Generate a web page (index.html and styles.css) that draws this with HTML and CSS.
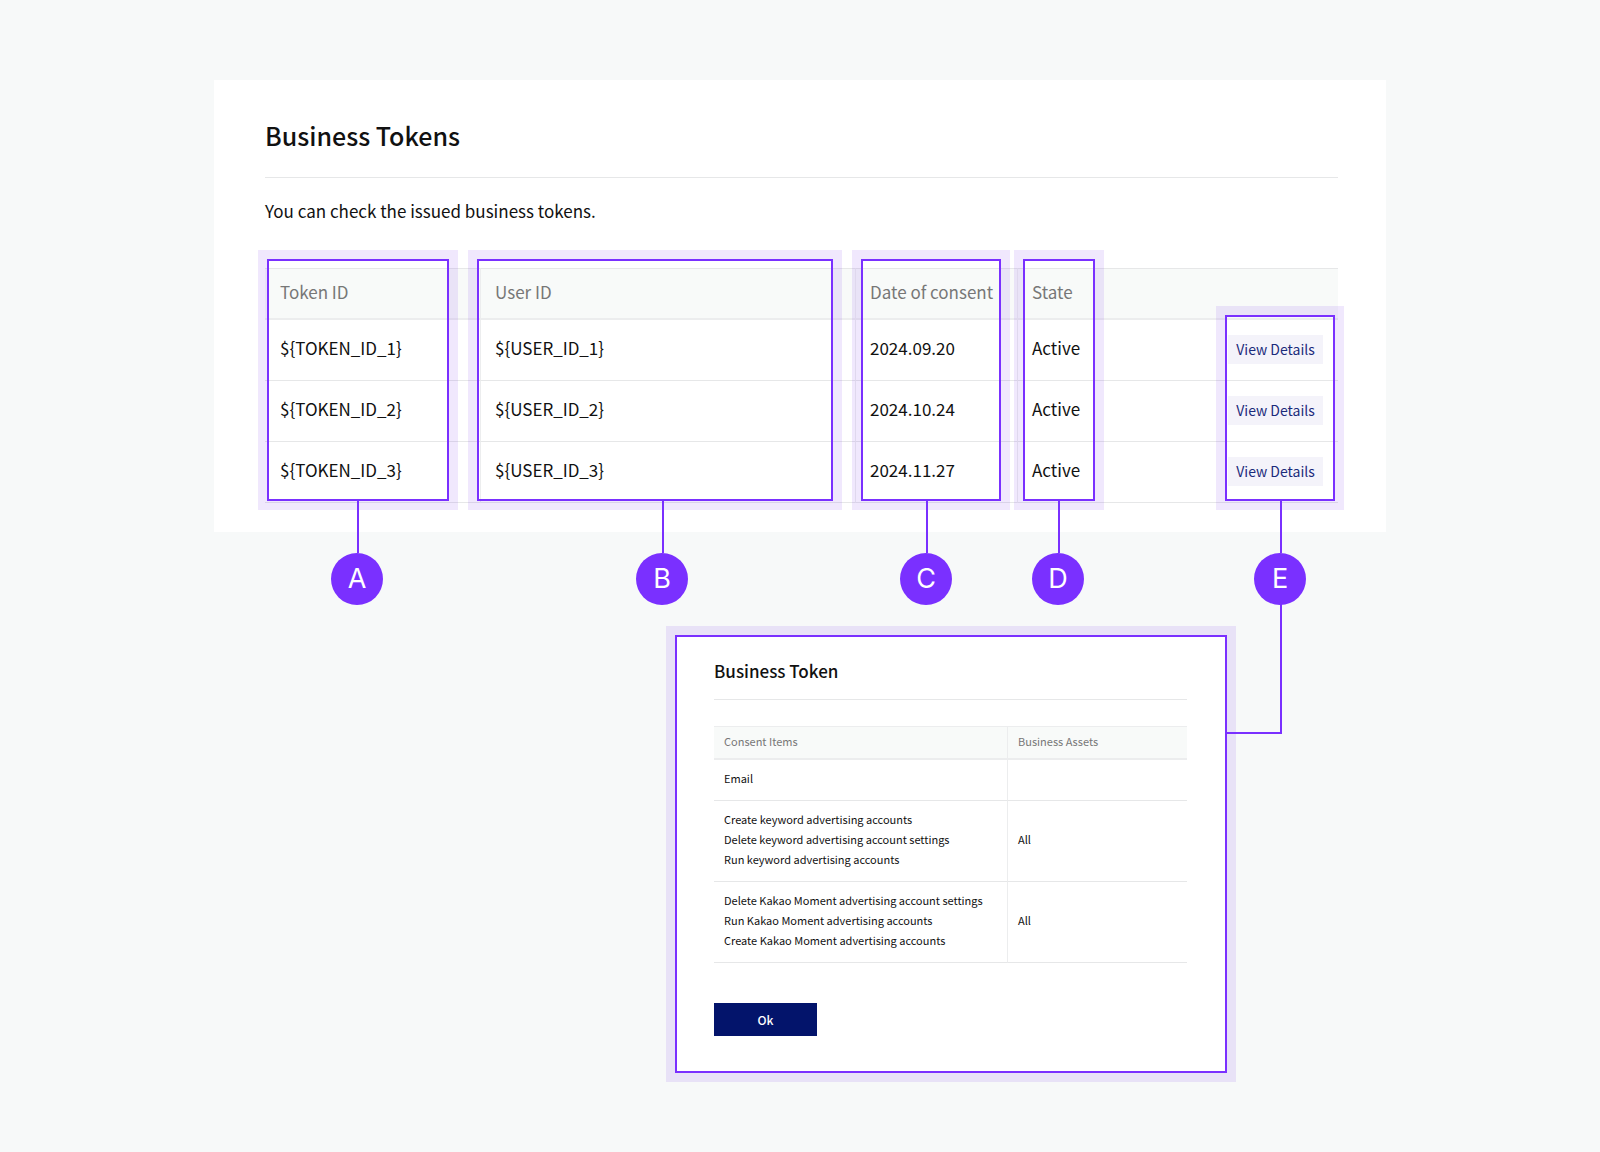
FILE: index.html
```html
<!DOCTYPE html>
<html lang="en">
<head>
<meta charset="utf-8">
<meta name="viewport" content="width=device-width, initial-scale=1">
<title>Business Tokens</title>
<link rel="stylesheet" href="styles.css">
</head>
<body>
<main class="figure">
  <section class="card">
    <h1 class="card-title">Business Tokens</h1>
    <p class="card-text">You can check the issued business tokens.</p>
    <table class="tokens">
      <colgroup>
        <col class="col-token"><col class="col-user"><col class="col-date"><col class="col-state"><col>
      </colgroup>
      <thead>
        <tr><th scope="col">Token ID</th><th scope="col">User ID</th><th scope="col">Date of consent</th><th scope="col">State</th><td></td></tr>
      </thead>
      <tbody>
        <tr><td>${TOKEN_ID_1}</td><td>${USER_ID_1}</td><td>2024.09.20</td><td>Active</td><td class="cell-action"><button class="details" type="button">View Details</button></td></tr>
        <tr><td>${TOKEN_ID_2}</td><td>${USER_ID_2}</td><td>2024.10.24</td><td>Active</td><td class="cell-action"><button class="details" type="button">View Details</button></td></tr>
        <tr><td>${TOKEN_ID_3}</td><td>${USER_ID_3}</td><td>2024.11.27</td><td>Active</td><td class="cell-action"><button class="details" type="button">View Details</button></td></tr>
      </tbody>
    </table>
  </section>

  <div class="callout callout-a"><div class="frame"></div><div class="stem"></div><span class="badge">A</span></div>
  <div class="callout callout-b"><div class="frame"></div><div class="stem"></div><span class="badge">B</span></div>
  <div class="callout callout-c"><div class="frame"></div><div class="stem"></div><span class="badge">C</span></div>
  <div class="callout callout-d"><div class="frame"></div><div class="stem"></div><span class="badge">D</span></div>
  <div class="callout callout-e"><div class="frame"></div><div class="stem"></div><span class="badge">E</span></div>

  <section class="panel">
    <h2 class="panel-title">Business Token</h2>
    <table class="consents">
      <colgroup><col class="col-items"><col></colgroup>
      <thead>
        <tr><th scope="col">Consent Items</th><th scope="col">Business Assets</th></tr>
      </thead>
      <tbody>
        <tr><td>Email</td><td></td></tr>
        <tr><td>Create keyword advertising accounts<br>Delete keyword advertising account settings<br>Run keyword advertising accounts</td><td>All</td></tr>
        <tr><td>Delete Kakao Moment advertising account settings<br>Run Kakao Moment advertising accounts<br>Create Kakao Moment advertising accounts</td><td>All</td></tr>
      </tbody>
    </table>
    <button class="ok" type="button">Ok</button>
  </section>
</main>
</body>
</html>
```

FILE: styles.css
```css
:root {
  --page: #f7f9f9;
  --line: #e6e7e8;
  --line-soft: #ecedee;
  --accent: #7a30ff;
  --halo: rgba(120, 50, 240, 0.11);
}

*,
*::after {
  box-sizing: border-box;
}

body {
  margin: 0;
  padding: 80px 24px;
  background: var(--page);
  color: #111;
  font-family: "Noto Sans CJK KR", "Noto Sans", sans-serif;
}

h1, h2, p {
  margin: 0;
}

button {
  border: 0;
  font-family: inherit;
  cursor: pointer;
}

.figure {
  position: relative;
  max-width: 1172px;
  margin: 0 auto;
}

/* Token list */
.card {
  padding: 35px 48px 29px 51px;
  background: #fff;
}

.card-title {
  padding-bottom: 22px;
  border-bottom: 1px solid var(--line);
  font-size: 25px;
  font-weight: 500;
  line-height: 40px;
}

.card-text {
  padding: 19px 0 44px;
  font-size: 17px;
  line-height: 27px;
}

table {
  width: 100%;
  table-layout: fixed;
  border-collapse: separate;
  border-spacing: 0;
}

th {
  color: #777;
  font-weight: 400;
  text-align: left;
}

.col-token { width: 215px; }
.col-user { width: 375px; }
.col-date { width: 162px; }
.col-state { width: 100px; }

.tokens {
  font-size: 17px;
  line-height: 27px;
}

.tokens th,
.tokens td {
  height: 61px;
  padding: 0 0 6px 15px;
  border-bottom: 1px solid var(--line);
}

.tokens thead th,
.tokens thead td {
  height: 52px;
  padding-bottom: 4px;
  border-top: 1px solid var(--line);
  border-bottom: 2px solid var(--line-soft);
  background: #f8faf9;
  white-space: nowrap;
}

.tokens th + th,
.tokens td + td:not(.cell-action) {
  padding-left: 14px;
  border-left: 1px solid var(--line-soft);
}

.tokens .cell-action {
  padding: 0 15px 2px 0;
  text-align: right;
}

.details {
  min-width: 95px;
  height: 29px;
  padding: 0 7px;
  background: #f4f3fa;
  color: #1b2b7b;
  font-size: 14px;
  line-height: 29px;
  vertical-align: middle;
}

/* Lettered callouts */
.callout {
  position: absolute;
  top: 179px;
  pointer-events: none;
}

.callout-a { left: 53px; width: 182px; --stem: 91px; }
.callout-b { left: 263px; width: 356px; --stem: 186px; }
.callout-c { left: 647px; width: 140px; --stem: 66px; }
.callout-d { left: 809px; width: 72px; --stem: 36px; }
.callout-e { right: 51px; width: 110px; --stem: 56px; top: 235px; }

.frame {
  height: 242px;
  border: 2px solid var(--accent);
  box-shadow: 0 0 0 9px var(--halo);
}

.callout-e .frame {
  height: 186px;
}

.stem {
  width: 2px;
  height: 52px;
  margin-left: calc(var(--stem) - 1px);
  background: var(--accent);
}

.badge {
  display: flex;
  align-items: center;
  justify-content: center;
  width: 52px;
  height: 52px;
  margin-left: calc(var(--stem) - 27px);
  border-radius: 50%;
  background: var(--accent);
  color: #fff;
  font-family: Inter, sans-serif;
  font-size: 27px;
  line-height: 52px;
}

/* Token detail panel */
.panel {
  position: relative;
  width: 552px;
  max-width: 100%;
  margin: 103px 159px 0 auto;
  padding: 20px 38px 35px 37px;
  border: 2px solid var(--accent);
  background: #fff;
  box-shadow: 0 0 0 9px var(--halo);
}

.panel::after {
  content: "";
  position: absolute;
  top: -33px;
  left: 100%;
  width: 57px;
  height: 130px;
  border: solid var(--accent);
  border-width: 0 2px 2px 0;
}

.panel-title {
  margin-bottom: 26px;
  padding-bottom: 14px;
  border-bottom: 1px solid var(--line);
  font-size: 17px;
  font-weight: 500;
  line-height: 28px;
}

.col-items { width: 293px; }

.consents {
  font-size: 11px;
  line-height: 20px;
}

.consents th,
.consents td {
  padding: 8px 10px 12px;
  border-bottom: 1px solid var(--line);
}

.consents td {
  height: 41px;
}

.consents th {
  padding: 4px 10px 7px;
  border-top: 1px solid var(--line-soft);
  border-bottom: 2px solid var(--line-soft);
  background: #f8faf9;
}

.consents th + th,
.consents td + td {
  border-left: 1px solid var(--line-soft);
}

.ok {
  display: block;
  width: 103px;
  height: 33px;
  margin-top: 40px;
  padding: 0;
  background: #03146b;
  color: #fff;
  font-size: 12px;
  font-weight: 500;
  line-height: 33px;
}
```
